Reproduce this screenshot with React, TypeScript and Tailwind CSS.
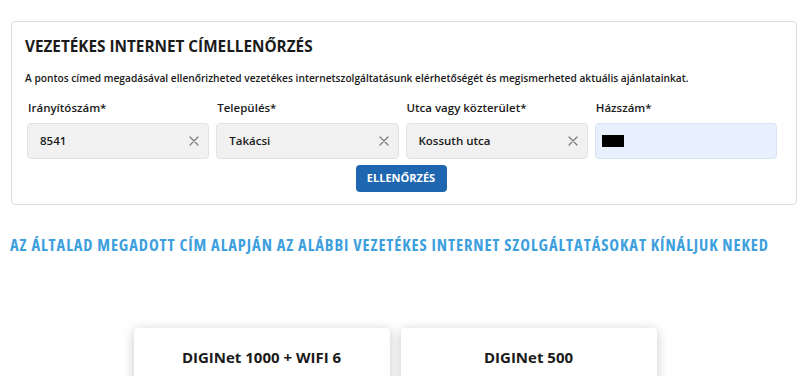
import React from "react";

const fields = [
  { label: "Irányítószám*", value: "8541" },
  { label: "Település*", value: "Takácsi" },
  { label: "Utca vagy közterület*", value: "Kossuth utca" },
];

function ClearIcon() {
  return (
    <svg width="10" height="10" viewBox="0 0 10 10" className="shrink-0">
      <path d="M1 1L9 9M9 1L1 9" stroke="#7a7a7a" strokeWidth="1.2" strokeLinecap="round" />
    </svg>
  );
}

function App() {
  return (
    <div className="w-[800px] h-[376px] overflow-hidden bg-white text-[#1a1a1a] font-['Open_Sans',sans-serif]">
      <div className="pt-[21px]">
        <section className="ml-[11px] mr-[3px] rounded-[4px] border border-[#dcdcdc] pl-[13px] pr-[19px] pt-[12px] pb-[12px]">
          <h1 className="text-[15.3px] font-bold leading-[24px]">
            VEZETÉKES INTERNET CÍMELLENŐRZÉS
          </h1>
          <p className="mt-[13px] text-[10.2px] font-semibold leading-[14px]">
            A pontos címed megadásával ellenőrizheted vezetékes internetszolgáltatásunk elérhetőségét és megismerheted aktuális ajánlatainkat.
          </p>
          <div className="mt-[15px] ml-[2px] grid grid-cols-4 gap-x-[7px]">
            {fields.map((f) => (
              <div key={f.label} className="flex flex-col">
                <label className="text-[11.5px] font-semibold leading-[16px] pl-[1px]">{f.label}</label>
                <div className="mt-[7px] h-[36px] flex items-center justify-between rounded-[4px] border border-[#e2e2e2] bg-[#f1f1f1] pl-[12px] pr-[9px]">
                  <span className="text-[11.5px] font-semibold">{f.value}</span>
                  <ClearIcon />
                </div>
              </div>
            ))}
            <div className="flex flex-col">
              <label className="text-[11.5px] font-semibold leading-[16px] pl-[1px]">Házszám*</label>
              <div className="mt-[7px] h-[36px] flex items-center rounded-[4px] border border-[#d9e3f2] bg-[#e8f0fe] pl-[6px]">
                <span className="block w-[22px] h-[12px] bg-black" />
              </div>
            </div>
          </div>
          <div className="mt-[6px] flex justify-center">
            <button className="h-[27px] w-[91px] rounded-[4px] bg-[#1e67b0] text-white text-[11px] font-bold">
              ELLENŐRZÉS
            </button>
          </div>
        </section>
      </div>

      <h2 className="mt-[29px] pl-[10px] text-[16.5px] font-bold leading-[22px] tracking-[0.9px] text-[#3d9fdd] font-stretch-[80%] whitespace-nowrap">
        AZ ÁLTALAD MEGADOTT CÍM ALAPJÁN AZ ALÁBBI VEZETÉKES INTERNET SZOLGÁLTATÁSOKAT KÍNÁLJUK NEKED
      </h2>

      <div className="mt-[72px] flex justify-center gap-[11px] pr-[10px]">
        {["DIGINet 1000 + WIFI 6", "DIGINet 500"].map((t) => (
          <div
            key={t}
            className="w-[256px] h-[80px] rounded-[4px] bg-white shadow-[0_2px_12px_rgba(0,0,0,0.22)] pt-[18px] text-center text-[15px] font-bold"
          >
            {t}
          </div>
        ))}
      </div>
    </div>
  );
}

export default App;
